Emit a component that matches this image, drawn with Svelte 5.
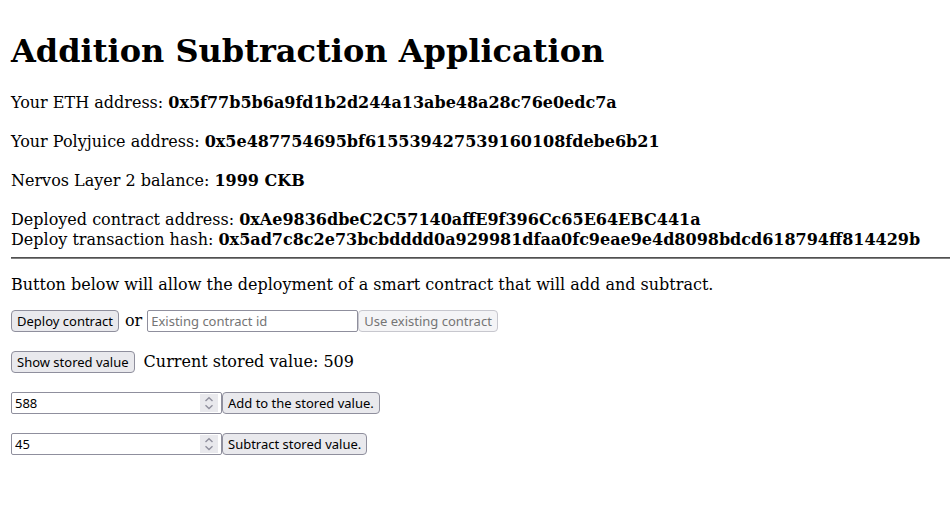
<script>
  let contractId = $state('');
  let addValue = $state(588);
  let subtractValue = $state(45);
  let storedValue = $state(509);
</script>

{#snippet spinner(step)}
  <span class="spin">
    <button type="button" aria-label="Increase" onclick={() => step(1)}>
      <svg viewBox="0 0 18 9"><path d="M5.5 7 9 3.8 12.5 7" /></svg>
    </button>
    <button type="button" aria-label="Decrease" onclick={() => step(-1)}>
      <svg viewBox="0 0 18 9"><path d="M5.5 2.3 9 5.5l3.5-3.2" /></svg>
    </button>
  </span>
{/snippet}

<main>
  <h1>Addition Subtraction Application</h1>
  <p>Your ETH address: <b>0x5f77b5b6a9fd1b2d244a13abe48a28c76e0edc7a</b></p>
  <p>Your Polyjuice address: <b>0x5e487754695bf615539427539160108fdebe6b21</b></p>
  <p>Nervos Layer 2 balance: <b>1999 CKB</b></p>
  <p>
    Deployed contract address: <b>0xAe9836dbeC2C57140affE9f396Cc65E64EBC441a</b><br />
    Deploy transaction hash: <b>0x5ad7c8c2e73bcbdddd0a929981dfaa0fc9eae9e4d8098bdcd618794ff814429b</b>
  </p>
  <hr />
  <p class="note">Button below will allow the deployment of a smart contract that will add and subtract.</p>
  <div class="row">
    <button class="btn" type="button">Deploy contract</button>
    <span class="or">or</span>
    <input class="field" aria-label="Existing contract id" placeholder="Existing contract id" bind:value={contractId} />
    <button class="btn" type="button" disabled={!contractId}>Use existing contract</button>
  </div>
  <div class="row">
    <button class="btn" type="button">Show stored value</button>
    <span class="stored">Current stored value: {storedValue}</span>
  </div>
  <div class="row">
    <span class="number">
      <input class="field" type="number" aria-label="Value to add" bind:value={addValue} />
      {@render spinner((n) => (addValue += n))}
    </span>
    <button class="btn" type="button" onclick={() => (storedValue += addValue)}>Add to the stored value.</button>
  </div>
  <div class="row">
    <span class="number">
      <input class="field" type="number" aria-label="Value to subtract" bind:value={subtractValue} />
      {@render spinner((n) => (subtractValue += n))}
    </span>
    <button class="btn" type="button" onclick={() => (storedValue -= subtractValue)}>Subtract stored value.</button>
  </div>
</main>

<style>
  :global(body) {
    margin: 0;
    background: #fff;
  }
  main {
    padding: 32px 0 20px 11px;
    color: #000;
    font: 16px/20px 'DejaVu Serif', serif;
  }
  h1 {
    margin: 0 0 22px;
    font-size: 32px;
    line-height: 39px;
  }
  p {
    margin: 0 0 19px;
  }
  hr {
    height: 0;
    margin: -12px 0 16px;
    border: 0;
    border-top: 1px solid #505050;
    border-bottom: 1px solid #808080;
  }
  .note {
    margin-bottom: 15px;
  }
  .row {
    display: flex;
    align-items: center;
    height: 22px;
    margin-bottom: 19px;
  }
  .btn,
  .field {
    box-sizing: border-box;
    height: 22px;
    margin: 0;
    border: 1px solid #8f8f9d;
    font: 13px/18px 'Noto Sans', sans-serif;
    color: #000;
  }
  .btn {
    padding: 0 5px;
    border-radius: 4px;
    background: #e9e9ed;
    white-space: nowrap;
  }
  .btn:disabled {
    border-color: #c7c7ce;
    background: #f4f4f6;
    color: #757575;
  }
  .field {
    width: 211px;
    padding: 0 3px;
    border-radius: 2px;
    background: #fff;
    appearance: textfield;
  }
  .field::placeholder {
    color: #757575;
    opacity: 1;
  }
  .field::-webkit-inner-spin-button {
    display: none;
  }
  .or {
    margin: 0 5px 0 6px;
  }
  .stored {
    margin-left: 9px;
  }
  .number {
    position: relative;
    display: flex;
  }
  .spin {
    position: absolute;
    top: 2px;
    right: 4px;
    display: flex;
    flex-direction: column;
    width: 18px;
  }
  .spin button {
    height: 9px;
    padding: 0;
    border: 0;
    background: #e9e9ed;
  }
  .spin svg {
    display: block;
    width: 18px;
    height: 9px;
    fill: none;
    stroke: #8f8f9d;
    stroke-width: 1.4;
  }
</style>
